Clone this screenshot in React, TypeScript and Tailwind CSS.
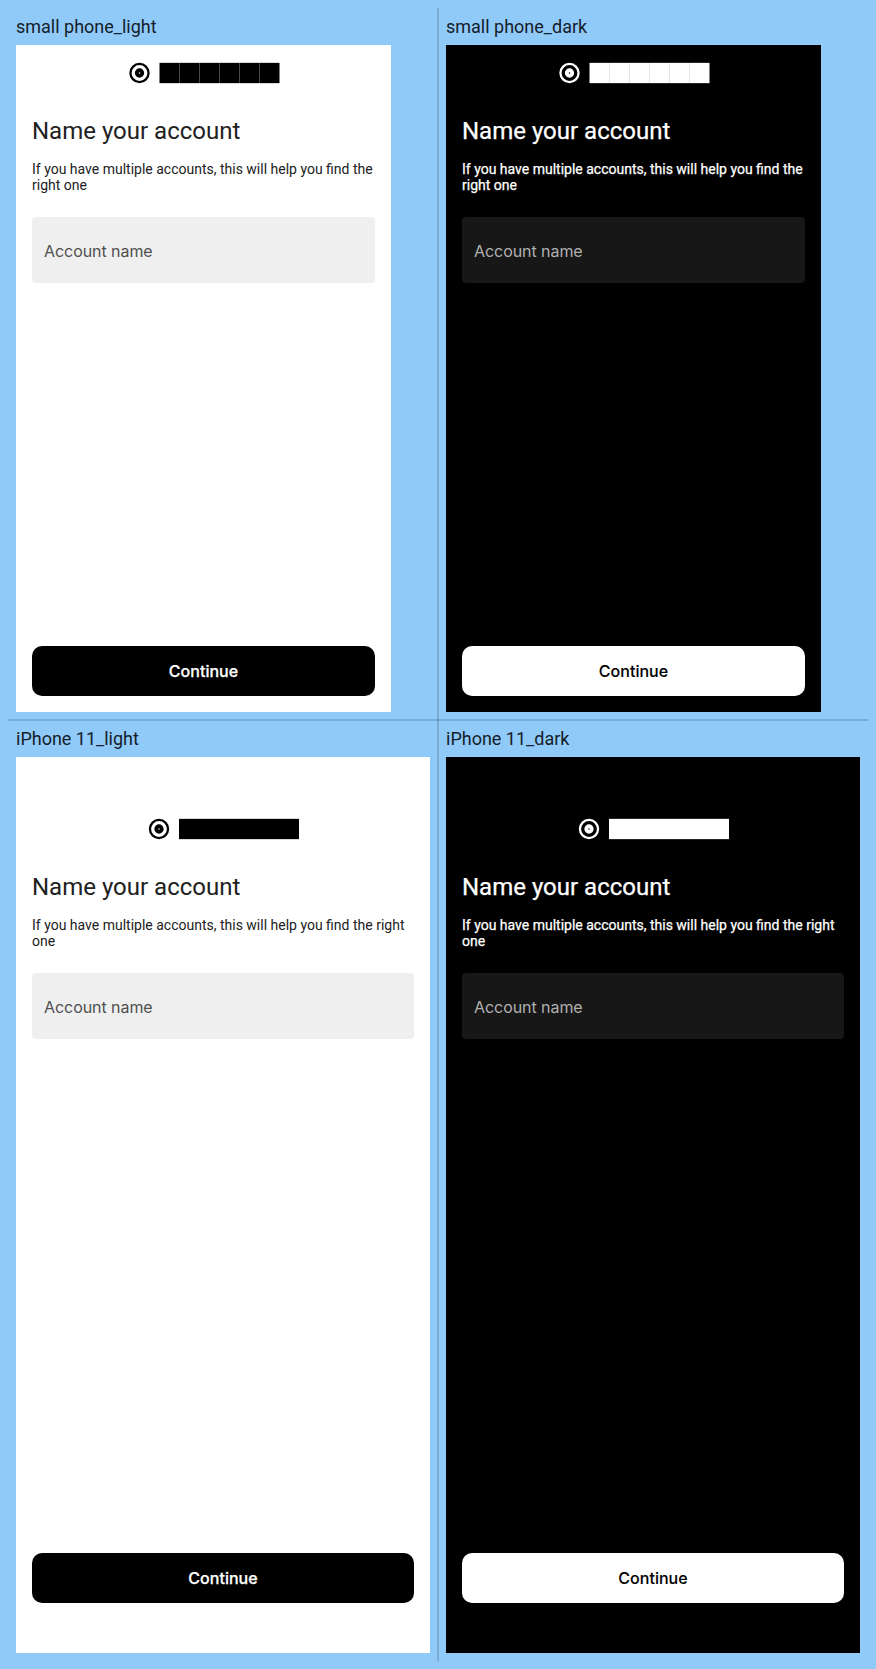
type Device = { name: string; frame: string; safeArea: string; offset: number; seams: boolean };

const devices: Device[] = [
  { name: "small phone", frame: "w-[375px] h-[667px]", safeArea: "", offset: 0.5, seams: true },
  { name: "iPhone 11", frame: "w-[414px] h-[896px]", safeArea: "pt-11 pb-[34px]", offset: 0, seams: false },
];

function Logo({ offset, seams, dark }: { offset: number; seams: boolean; dark: boolean }) {
  return (
    <svg width="153" height="24" viewBox="0 0 153 24" fill="currentColor" className="shrink-0">
      <g transform={`translate(${offset} 0)`}>
        <circle cx="12" cy="12" r="9.05" fill="none" stroke="currentColor" strokeWidth="2.3" />
        <circle cx="12" cy="12" r="2.7" fill="none" stroke="currentColor" strokeWidth="3.9" />
        <rect x="32" y="1.85" width="120" height="20.3" />
        {seams &&
          [1, 2, 3, 4, 5].map((i) => (
            <rect key={i} x={31.5 + i * 20} y="2" width="1" height="20" fill={dark ? "#e6e6e6" : "#484848"} />
          ))}
      </g>
    </svg>
  );
}

function Screen({ device, dark }: { device: Device; dark: boolean }) {
  return (
    <div className={`flex flex-col ${device.frame} ${device.safeArea} ${dark ? "bg-black text-white" : "bg-white text-black"}`}>
      <header className="flex h-14 items-center justify-center">
        <Logo offset={device.offset} seams={device.seams} dark={dark} />
      </header>
      <main className="flex flex-1 flex-col px-4 pb-4 pt-4">
        <h1 className={`text-[24px] leading-7 ${dark ? "text-white [-webkit-text-stroke:0.25px_white]" : "text-[#212121]"}`}>
          Name your account
        </h1>
        <p className={`mt-4 text-[14px] leading-4 ${dark ? "text-white [-webkit-text-stroke:0.25px_white]" : "text-[#212121]"}`}>
          If you have multiple accounts, this will help you find the right one
        </p>
        <div
          className={`mt-6 flex h-[66px] items-center rounded-[4px] px-3 pt-[2px] font-[Inter,sans-serif] text-[16px] tracking-[-0.06px] ${
            dark ? "bg-[#171717] text-[#b0b0b0]" : "bg-[#efefef] text-[#505050]"
          }`}
        >
          Account name
        </div>
        <button
          className={`mt-auto h-[50px] rounded-[10px] font-[Inter,sans-serif] text-[16px] font-medium tracking-[0.03px] ${
            dark ? "bg-white text-black [-webkit-text-stroke:0.1px_black]" : "bg-black text-white [-webkit-text-stroke:0.25px_white]"
          }`}
        >
          Continue
        </button>
      </main>
    </div>
  );
}

export default function App() {
  return (
    <div className="h-[1669px] w-[876px] bg-[#90caf9] p-2 font-[Roboto,sans-serif]">
      <div className="relative grid grid-cols-2">
        {devices.map((device) =>
          [false, true].map((dark) => (
            <section key={device.name + dark} className="flex flex-col items-start gap-2 p-2">
              <h2 className="h-[21px] text-[18px] leading-[21px] text-[#14202a]">
                {device.name}_{dark ? "dark" : "light"}
              </h2>
              <Screen device={device} dark={dark} />
            </section>
          )),
        )}
        <div className="absolute inset-y-0 left-[429px] w-[2px] bg-black/15" />
        <div className="absolute inset-x-0 top-[711px] h-[2px] bg-black/15" />
      </div>
    </div>
  );
}
